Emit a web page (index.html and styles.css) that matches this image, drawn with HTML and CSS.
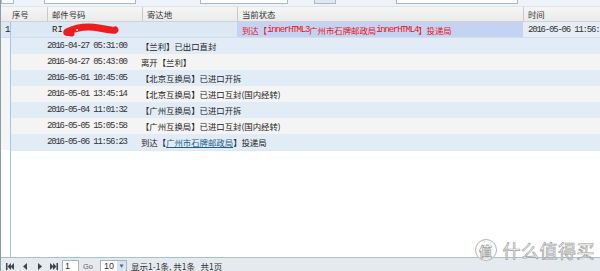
FILE: index.html
```html
<!DOCTYPE html>
<html lang="zh-CN">
<head>
  <meta charset="UTF-8" />
  <title>邮件跟踪</title>
  <link rel="stylesheet" href="styles.css">
</head>
<body>
  <div class="page">
    <div class="toolbar">
      <span class="tb-box b1"></span>
      <span class="tb-box b2"></span>
      <span class="tb-box b3"></span>
      <span class="tb-box b4"></span>
      <span class="tb-box b5"></span>
    </div>

    <div class="grid-head">
      <div class="hc c-no">序号</div>
      <div class="hc c-mail">邮件号码</div>
      <div class="hc c-dest">寄达地</div>
      <div class="hc c-state">当前状态</div>
      <div class="hc c-time">时间</div>
    </div>

    <div class="grid-body">
      <div class="row-main">
        <div class="cell c-no">1</div>
        <div class="cell c-mail">RI<svg class="scribble" width="56" height="14" viewBox="0 0 56 14"><path d="M4 9 C 12 5, 24 3, 36 5 S 50 8, 52 7" stroke="#ee1c1c" stroke-width="7" fill="none" stroke-linecap="round"/><path d="M3 10 L 9 11" stroke="#ee1c1c" stroke-width="5" stroke-linecap="round"/><circle cx="14" cy="7" r="1" fill="#fff"/></svg></div>
        <div class="cell c-dest"></div>
        <div class="cell c-state">到达【<span class="mono">innerHTML3</span>广州市石牌邮政局<span class="mono">innerHTML4</span>】投递局</div>
        <div class="cell c-time mono">2016-05-06 11:56:23</div>
      </div>

      <div class="detail">
        <div class="gutter"></div>
        <div class="sub">
          <div class="sub-row"><span class="sub-date mono">2016-04-27 05:31:00</span><span class="sub-text">【兰利】已出口直封</span></div>
          <div class="sub-row"><span class="sub-date mono">2016-04-27 05:43:00</span><span class="sub-text">离开【兰利】</span></div>
          <div class="sub-row"><span class="sub-date mono">2016-05-01 10:45:05</span><span class="sub-text">【北京互换局】已进口开拆</span></div>
          <div class="sub-row"><span class="sub-date mono">2016-05-01 13:45:14</span><span class="sub-text">【北京互换局】已进口互封(国内经转)</span></div>
          <div class="sub-row"><span class="sub-date mono">2016-05-04 11:01:32</span><span class="sub-text">【广州互换局】已进口开拆</span></div>
          <div class="sub-row"><span class="sub-date mono">2016-05-05 15:05:58</span><span class="sub-text">【广州互换局】已进口互封(国内经转)</span></div>
          <div class="sub-row"><span class="sub-date mono">2016-05-06 11:56:23</span><span class="sub-text">到达【<a class="office" href="#">广州市石牌邮政局</a>】投递局</span></div>
        </div>
      </div>
    </div>

    <div class="pager">
      <svg class="pg-icon" width="8" height="7" viewBox="0 0 8 7"><rect x="0" y="0" width="1.5" height="7" fill="#444"/><path d="M5 0 L1.5 3.5 L5 7Z M8 0 L4.5 3.5 L8 7Z" fill="#444"/></svg>
      <svg class="pg-icon prev" width="4" height="7" viewBox="0 0 4 7"><path d="M4 0 L0 3.5 L4 7Z" fill="#444"/></svg>
      <svg class="pg-icon next" width="4" height="7" viewBox="0 0 4 7"><path d="M0 0 L4 3.5 L0 7Z" fill="#444"/></svg>
      <svg class="pg-icon last" width="8" height="7" viewBox="0 0 8 7"><path d="M0 0 L3.5 3.5 L0 7Z M3 0 L6.5 3.5 L3 7Z" fill="#444"/><rect x="6.5" y="0" width="1.5" height="7" fill="#444"/></svg>
      <span class="pg-input">1</span>
      <span class="pg-go">Go</span>
      <span class="pg-select">10<span class="pg-arrow">&#9660;</span></span>
      <span class="pg-info">显示1-1条, 共1条&nbsp;&nbsp;&nbsp;共1页</span>
    </div>

    <div class="watermark"><span class="wm-circle">值</span><span class="wm-text">什么值得买</span></div>
  </div>
</body>
</html>
```

FILE: styles.css
```css
body {
  margin: 0;
  padding: 0;
  background: #fff;
  font-family: "Noto Sans CJK SC", sans-serif;
  color: #222;
}
.page {
  position: relative;
  width: 600px;
  height: 271px;
  overflow: hidden;
  display: flex;
  flex-direction: column;
  box-sizing: border-box;
  border-left: 1px solid #8e9ba6;
}
.mono {
  font-family: "Liberation Mono", monospace;
  font-size: 9px;
  letter-spacing: -1.2px;
}

/* filter strip, mostly scrolled away */
.toolbar {
  height: 7px;
  flex: none;
  display: flex;
  background: #eef3f9;
  border-bottom: 1px solid #dfe4ea;
  box-sizing: border-box;
}
.tb-box {
  height: 3px;
  background: #fff;
  border: 1px solid #a9bacb;
  border-top: none;
}
.b1 { width: 11px; margin-left: 0; background: #f7f9fb; }
.b2 { width: 90px; margin-left: 30px; }
.b3 { width: 86px; margin-left: 64px; }
.b4 { width: 20px; margin-left: 26px; background: #dfe7ef; }
.b5 { width: 120px; margin-left: 60px; }

/* grid header */
.grid-head {
  height: 15px;
  flex: none;
  display: flex;
  background: linear-gradient(#f6f6f6, #ebebeb);
  border-bottom: 1px solid #d2d2d2;
  box-sizing: border-box;
  font-size: 8.4px;
  color: #333;
}
.hc {
  display: flex;
  align-items: center;
  box-sizing: border-box;
  padding-left: 4px;
  border-left: 1px solid #c9c9c9;
  white-space: nowrap;
}
.hc.c-no { border-left: none; }

.c-no { width: 46px; padding-left: 11px; }
.c-mail { width: 95px; }
.c-dest { width: 95px; }
.c-state { width: 286px; }
.c-time { flex: 1; overflow: hidden; white-space: nowrap; }

/* grid body */
.grid-body {
  flex: 1;
  display: flex;
  flex-direction: column;
}
.row-main {
  height: 16px;
  flex: none;
  display: flex;
  background: #dde8f5;
  border-bottom: 1px solid #d3deeb;
  box-sizing: border-box;
  font-size: 8.4px;
}
.cell {
  display: flex;
  align-items: center;
  box-sizing: border-box;
  padding-left: 4px;
  border-left: 1px solid transparent;
  white-space: nowrap;
}
.row-main .c-no {
  border-left: none;
  background: linear-gradient(#a6c4e6, #a6c4e6) 9px 0 / 1px 100% no-repeat;
}
.row-main .c-no,
.row-main .c-mail {
  font-family: "Liberation Mono", monospace;
  font-size: 9px;
}
.row-main .c-state {
  background: #c3d3f1;
  color: #ee1111;
}
.row-main .c-time {
  background: #e6edf5;
  color: #333;
}
.scribble {
  margin-left: 0;
}

.detail {
  flex: 1;
  display: flex;
}
.gutter {
  width: 9px;
  flex: none;
  background: linear-gradient(#f4f5f7, #f4f5f7) 0 0 / 100% 112px no-repeat #fff;
  border-right: 1px solid #a6c4e6;
}
.sub {
  flex: 1;
}
.sub-row {
  height: 16px;
  display: flex;
  align-items: center;
  background: #e2ecf7;
  font-size: 8.4px;
  white-space: nowrap;
}
.sub-row:nth-child(even) {
  background: #f4f4f4;
}
.sub-row:last-child {
  border-bottom: 1px solid #e2e8ef;
}
.sub-date {
  width: 130px;
  padding-left: 36px;
  box-sizing: border-box;
  color: #333;
}
.sub-text {
  color: #222;
}
.office {
  color: #1b5f86;
  text-decoration: underline;
}

/* pager */
.pager {
  height: 14px;
  flex: none;
  display: flex;
  align-items: center;
  background: #e4eaee;
  border-top: 1px solid #a9bfd2;
  box-sizing: border-box;
  padding-left: 5px;
  font-size: 8.5px;
  color: #333;
}
.pg-icon {
  flex: none;
  margin-top: 3px;
}
.prev { margin-left: 9px; }
.next { margin-left: 11px; }
.last { margin-left: 8px; }
.pg-input {
  width: 17px;
  height: 12px;
  margin-left: 4px;
  margin-top: 3px;
  padding-left: 2px;
  box-sizing: border-box;
  background: #fff;
  border: 1px solid #a7b4c0;
  font-family: "Liberation Sans", sans-serif;
  font-size: 9px;
  line-height: 11px;
}
.pg-go {
  margin-left: 4px;
  margin-top: 3px;
  font-family: "Liberation Sans", sans-serif;
  font-size: 7.5px;
  color: #666;
}
.pg-select {
  display: flex;
  align-items: center;
  width: 27px;
  height: 12px;
  margin-left: 7px;
  margin-top: 3px;
  padding-left: 3px;
  box-sizing: border-box;
  background: #fff;
  border: 1px solid #a7b4c0;
  font-family: "Liberation Sans", sans-serif;
  font-size: 9px;
}
.pg-arrow {
  margin-left: auto;
  width: 9px;
  height: 10px;
  background: #d6e3f3;
  color: #3c5f8c;
  font-size: 6px;
  text-align: center;
  line-height: 10px;
}
.pg-info {
  margin-left: 4px;
  margin-top: 3px;
  font-size: 8.5px;
}

/* site watermark laid over the screenshot */
.watermark {
  position: absolute;
  right: 5px;
  bottom: 8px;
  display: flex;
  align-items: center;
  gap: 6px;
}
.wm-circle {
  width: 20px;
  height: 20px;
  border-radius: 50%;
  border: 1.5px solid #b5b5b5;
  background: #fff;
  color: #fff;
  -webkit-text-stroke: 0.7px #9a9a9a;
  font-size: 13px;
  font-weight: bold;
  display: flex;
  align-items: center;
  justify-content: center;
}
.wm-text {
  font-size: 18px;
  letter-spacing: 0.5px;
  color: #fff;
  -webkit-text-stroke: 0.7px #a0a0a0;
}
```
